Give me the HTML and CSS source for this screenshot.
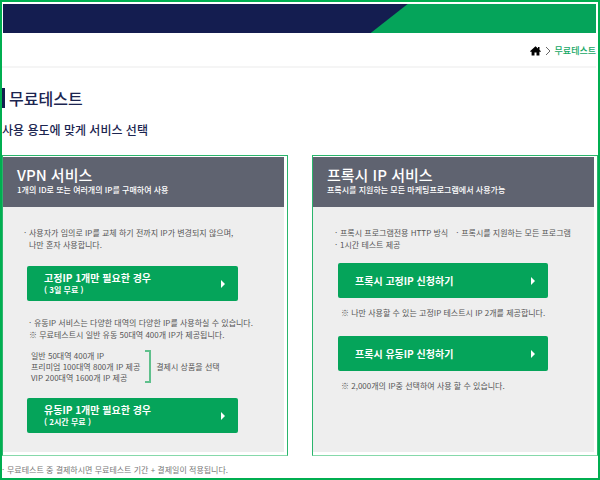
FILE: index.html
```html
<!DOCTYPE html>
<html lang="ko">
<head>
    <meta charset="UTF-8">
    <meta name="viewport" content="width=device-width, initial-scale=1.0">
    <title>무료테스트</title>
    <link rel="stylesheet" href="styles.css">
</head>
<body>

    <div class="page">
        <div class="banner">
            <div class="banner-accent"></div>
        </div>

        <nav class="breadcrumb">
            <a href="#" aria-label="홈">
                <svg class="icon-home" viewBox="0 0 11 10" width="11" height="10">
                    <path d="M5.5 0.2 L8 2.5 V1 H9.5 V3.9 L11 5.3 L10.5 5.8 H9.4 V9.6 H6.5 V6.6 H4.5 V9.6 H1.6 V5.8 H0.5 L0 5.3 Z"></path>
                </svg>
            </a>
            <svg class="icon-next" viewBox="0 0 6 10" width="6" height="10">
                <path d="M1 1 L5 5 L1 9"></path>
            </svg>
            <a class="current" href="#">무료테스트</a>
        </nav>

        <h1 class="title">무료테스트</h1>
        <p class="subtitle">사용 용도에 맞게 서비스 선택</p>

        <div class="panels">
            <section class="panel">
                <header class="panel-head">
                    <h2>VPN 서비스</h2>
                    <p>1개의 ID로 또는 여러개의 IP를 구매하여 사용</p>
                </header>
                <div class="panel-body">
                    <ul class="dots">
                        <li>사용자가 임의로 IP를 교체 하기 전까지 IP가 변경되지 않으며,<br>나만 혼자 사용합니다.</li>
                    </ul>
                    <button class="btn" type="button">
                        <span>고정IP 1개만 필요한 경우<small>( 3일 무료 )</small></span>
                        <svg class="arrow" viewBox="0 0 4 8" width="4" height="8"><path d="M0 0 L4 4 L0 8 Z"></path></svg>
                    </button>
                    <div class="desc">
                        <ul class="dots">
                            <li>유동IP 서비스는 다양한 대역의 다양한 IP를 사용하실 수 있습니다.</li>
                        </ul>
                        <p>※ 무료테스트시 일반 유동 50대역 400개 IP가 제공됩니다.</p>
                    </div>
                    <div class="options">
                        <ul class="plans">
                            <li>일반 50대역 400개 IP</li>
                            <li>프리미엄 100대역 800개 IP 제공</li>
                            <li>VIP 200대역 1600개 IP 제공</li>
                        </ul>
                        <div class="bracket"></div>
                        <p>결제시 상품을 선택</p>
                    </div>
                    <button class="btn" type="button">
                        <span>유동IP 1개만 필요한 경우<small>( 2시간 무료 )</small></span>
                        <svg class="arrow" viewBox="0 0 4 8" width="4" height="8"><path d="M0 0 L4 4 L0 8 Z"></path></svg>
                    </button>
                </div>
            </section>

            <section class="panel">
                <header class="panel-head">
                    <h2>프록시 IP 서비스</h2>
                    <p>프록시를 지원하는 모든 마케팅프로그램에서 사용가능</p>
                </header>
                <div class="panel-body proxy">
                    <ul class="dots features">
                        <li>프록시 프로그램전용 HTTP 방식</li>
                        <li>프록시를 지원하는 모든 프로그램</li>
                        <li>1시간 테스트 제공</li>
                    </ul>
                    <button class="btn" type="button">
                        <span>프록시 고정IP 신청하기</span>
                        <svg class="arrow" viewBox="0 0 4 8" width="4" height="8"><path d="M0 0 L4 4 L0 8 Z"></path></svg>
                    </button>
                    <p class="note">※ 나만 사용할 수 있는 고정IP 테스트시 IP 2개를 제공합니다.</p>
                    <button class="btn" type="button">
                        <span>프록시 유동IP 신청하기</span>
                        <svg class="arrow" viewBox="0 0 4 8" width="4" height="8"><path d="M0 0 L4 4 L0 8 Z"></path></svg>
                    </button>
                    <p class="note">※ 2,000개의 IP중 선택하여 사용 할 수 있습니다.</p>
                </div>
            </section>
        </div>

        <ul class="dots footnote">
            <li>무료테스트 중 결제하시면 무료테스트 기간 + 결제일이 적용됩니다.</li>
        </ul>
    </div>

</body>
</html>
```
FILE: styles.css
```css
* {
    box-sizing: border-box;
    margin: 0;
    padding: 0;
}
body {
    font-family: "Noto Sans CJK KR", "Noto Sans", sans-serif;
    font-size: 8px;
    line-height: 12px;
    color: #555;
    background-color: #fff;
}
ul {
    list-style: none;
}
a {
    color: inherit;
    text-decoration: none;
}
svg {
    display: block;
}
.page {
    min-height: 100vh;
    padding-top: 2px;
    border: 2px solid #00ae50;
}

/* top banner */
.banner {
    display: flex;
    justify-content: flex-end;
    height: 29px;
    margin: 0 2px 0 1px;
    background-color: #141d50;
}
.banner-accent {
    width: 38%;
    background-color: #05a45a;
    clip-path: polygon(37px 0, 100% 0, 100% 100%, 0 100%);
}

.breadcrumb {
    display: flex;
    align-items: center;
    justify-content: flex-end;
    gap: 4px;
    height: 35px;
    margin-right: 2px;
    padding-top: 2px;
    border-bottom: 2px solid #f5f5f5;
    font-size: 9px;
}
.icon-home {
    fill: #000;
}
.icon-next {
    fill: none;
    stroke: #666;
}
.current {
    font-weight: 500;
    color: #16a765;
}

.title {
    margin-top: 20px;
    padding-left: 4px;
    border-left: 3px solid #141d50;
    font-size: 16px;
    font-weight: 500;
    line-height: 20px;
    color: #1c2550;
}
.subtitle {
    margin-top: 12px;
    font-size: 12px;
    font-weight: 500;
    line-height: 20px;
    color: #1c2550;
}

/* service panels */
.panels {
    display: flex;
    gap: 24px;
    margin-top: 15px;
}
.panel {
    display: flex;
    flex: 1;
    flex-direction: column;
    min-width: 0;
    padding: 1px 3px 3px 0;
    border: 1px solid #2ab56c;
    border-bottom-color: #86d9aa;
}
.panel-head {
    padding: 9px 14px 11px;
    font-weight: 500;
    color: #fff;
    background-color: #5f6370;
}
.panel-head h2 {
    font-size: 15px;
    font-weight: 500;
    line-height: 18px;
}
.panel-body {
    flex: 1;
    padding: 20px 0 19px 24px;
    background-color: #eee;
}
.dots li {
    position: relative;
    padding-left: 5px;
}
.dots li::before {
    content: "·";
    position: absolute;
    left: 0;
}
.panel-body > .dots {
    margin-left: -3px;
}
.desc {
    margin: 16px 0 9px 2px;
}

.btn {
    display: flex;
    align-items: center;
    justify-content: space-between;
    width: 82%;
    height: 35px;
    margin-top: 15px;
    padding: 0 13px 0 17px;
    border: 0;
    border-radius: 2px;
    font-family: inherit;
    font-size: 10px;
    font-weight: 700;
    line-height: 12px;
    text-align: left;
    color: #fff;
    background-color: #05a45a;
    cursor: pointer;
}
.btn small {
    display: block;
    font-size: 8px;
    line-height: 11px;
}
.arrow {
    fill: #fff;
}

.options {
    display: flex;
    align-items: center;
    gap: 5px;
    padding-left: 4px;
}
.plans {
    line-height: 11px;
}
.bracket {
    align-self: stretch;
    width: 6px;
    border: 2px solid #5fc08c;
    border-left: 0;
}

.proxy {
    padding-left: 25px;
}
.proxy .btn {
    margin-top: 12px;
}
.features {
    display: flex;
    flex-wrap: wrap;
    column-gap: 8px;
}
.note {
    margin: 9px 0 0 3px;
}
.proxy .note + .btn {
    margin-top: 17px;
}

.footnote {
    padding: 8px 0 2px;
    color: #777;
}
```
